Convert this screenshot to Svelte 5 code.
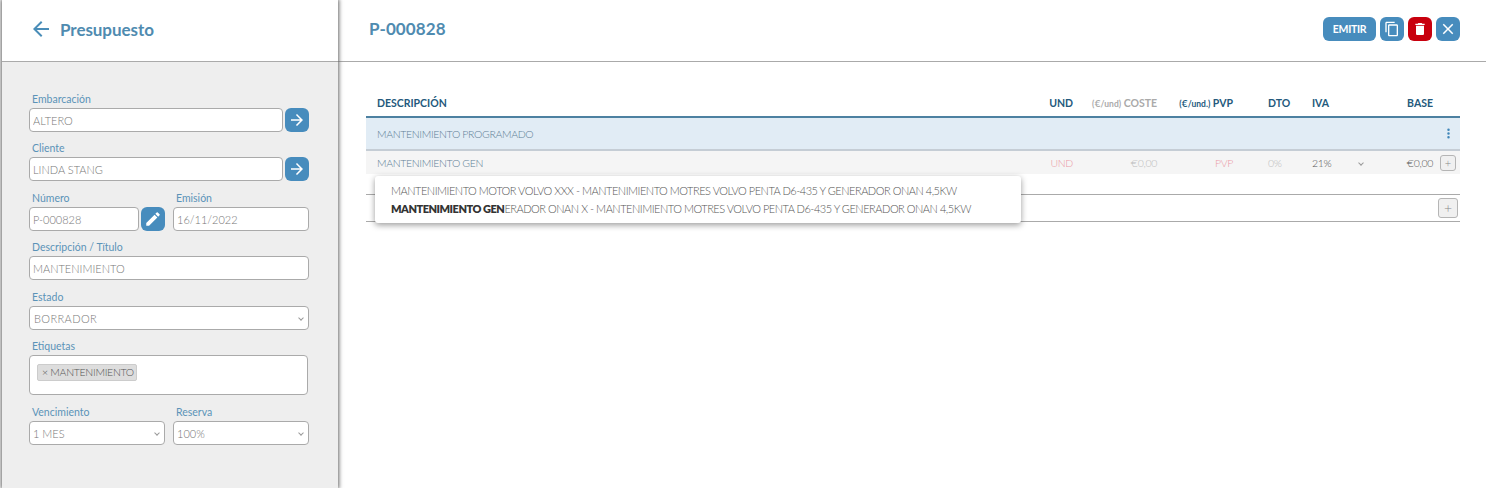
<script>
  const lines = [
    { name: 'MANTENIMIENTO MOTOR VOLVO XXX', bold: '' },
    { name: 'ERADOR ONAN X', bold: 'MANTENIMIENTO GEN' }
  ]
  const detail = ' - MANTENIMIENTO MOTRES VOLVO PENTA D6-435 Y GENERADOR ONAN 4,5KW'
</script>

<div class="page">
  <aside class="side">
    <header class="side-head">
      <svg class="back" viewBox="0 0 24 24"><path d="M20 11H7.83l5.59-5.59L12 4l-8 8 8 8 1.41-1.41L7.83 13H20v-2z" /></svg>
      <h1>Presupuesto</h1>
    </header>
    <form class="form">
      <div class="field">
        <label for="boat">Embarcación</label>
        <div class="with-btn">
          <input id="boat" value="ALTERO" />
          <button type="button" class="btn square" aria-label="Abrir embarcación">
            <svg viewBox="0 0 24 24"><path d="M12 4l-1.41 1.41L16.17 11H4v2h12.17l-5.58 5.59L12 20l8-8z" /></svg>
          </button>
        </div>
      </div>
      <div class="field">
        <label for="client">Cliente</label>
        <div class="with-btn">
          <input id="client" value="LINDA STANG" />
          <button type="button" class="btn square" aria-label="Abrir cliente">
            <svg viewBox="0 0 24 24"><path d="M12 4l-1.41 1.41L16.17 11H4v2h12.17l-5.58 5.59L12 20l8-8z" /></svg>
          </button>
        </div>
      </div>
      <div class="two nudge">
        <div class="field">
          <label for="num">Número</label>
          <div class="with-btn tight">
            <input id="num" value="P-000828" />
            <button type="button" class="btn square" aria-label="Editar número">
              <svg viewBox="0 0 24 24"><path d="M3 17.25V21h3.75L17.81 9.94l-3.75-3.75L3 17.25zM20.71 7.04a1 1 0 0 0 0-1.41l-2.34-2.34a1 1 0 0 0-1.41 0l-1.83 1.83 3.75 3.75 1.83-1.83z" /></svg>
            </button>
          </div>
        </div>
        <div class="field">
          <label for="date">Emisión</label>
          <input id="date" value="16/11/2022" />
        </div>
      </div>
      <div class="field">
        <label for="title">Descripción / Título</label>
        <input id="title" value="MANTENIMIENTO" />
      </div>
      <div class="field nudge">
        <label for="state">Estado</label>
        <div class="select wide" id="state">BORRADOR<span class="chev"></span></div>
      </div>
      <div class="field">
        <span class="lab">Etiquetas</span>
        <div class="tags"><span class="tag">× MANTENIMIENTO</span></div>
      </div>
      <div class="two nudge">
        <div class="field">
          <span class="lab">Vencimiento</span>
          <div class="select">1 MES<span class="chev"></span></div>
        </div>
        <div class="field">
          <span class="lab">Reserva</span>
          <div class="select">100%<span class="chev"></span></div>
        </div>
      </div>
    </form>
  </aside>

  <main class="main">
    <header class="main-head">
      <h2>P-000828</h2>
      <div class="actions">
        <button class="btn emit">EMITIR</button>
        <button class="btn square small-icon" aria-label="Duplicar">
          <svg viewBox="0 0 24 24"><path d="M16 1H4c-1.1 0-2 .9-2 2v14h2V3h12V1zm3 4H8c-1.1 0-2 .9-2 2v14c0 1.1.9 2 2 2h11c1.1 0 2-.9 2-2V7c0-1.1-.9-2-2-2zm0 16H8V7h11v14z" /></svg>
        </button>
        <button class="btn square small-icon red" aria-label="Eliminar">
          <svg viewBox="0 0 24 24"><path d="M6 19c0 1.1.9 2 2 2h8c1.1 0 2-.9 2-2V7H6v12zM19 4h-3.5l-1-1h-5l-1 1H5v2h14V4z" /></svg>
        </button>
        <button class="btn square" aria-label="Cerrar">
          <svg viewBox="0 0 24 24"><path d="M19 6.41L17.59 5 12 10.59 6.41 5 5 6.41 10.59 12 5 17.59 6.41 19 12 13.41 17.59 19 19 17.59 13.41 12z" /></svg>
        </button>
      </div>
    </header>

    <section class="table">
      <div class="row head">
        <span>DESCRIPCIÓN</span>
        <span class="r">UND</span>
        <span class="r muted"><small>(€/und)</small> COSTE</span>
        <span class="r"><small>(€/und.)</small> PVP</span>
        <span class="dto">DTO</span>
        <span>IVA</span>
        <span class="r">BASE</span>
        <span></span>
      </div>
      <div class="chapter">
        <span>MANTENIMIENTO PROGRAMADO</span>
        <svg class="dots" viewBox="0 0 24 24"><path d="M12 8a2 2 0 1 0 0-4 2 2 0 0 0 0 4zm0 2a2 2 0 1 0 0 4 2 2 0 0 0 0-4zm0 6a2 2 0 1 0 0 4 2 2 0 0 0 0-4z" /></svg>
      </div>
      <div class="row item">
        <span class="desc">MANTENIMIENTO GEN</span>
        <span class="r pink">UND</span>
        <span class="r faint">€0,00</span>
        <span class="r pink">PVP</span>
        <span class="dto faint">0%</span>
        <span class="iva">21%<span class="chev"></span></span>
        <span class="r">€0,00</span>
        <span class="plus-cell"><button class="plus small">+</button></span>
      </div>
      <div class="add-row">
        <button class="plus">+</button>
      </div>

      <div class="suggest">
        {#each lines as line}
          <div><b>{line.bold}</b>{line.name}{detail}</div>
        {/each}
      </div>
    </section>
  </main>
</div>

<style>
  :global(body) {
    margin: 0;
    background: #fff;
  }
  .page {
    display: flex;
    height: 488px;
    overflow: hidden;
    font-family: Lato, "Open Sans", sans-serif;
    font-weight: 300;
    color: #555;
    font-size: 11px;
    font-variant-numeric: lining-nums;
  }
  .side {
    width: 336px;
    margin-left: 2px;
    background: #eee;
    box-shadow: 0 0 4px 1px #666;
    flex: none;
    position: relative;
    z-index: 1;
  }
  .side-head {
    height: 62px;
    background: #fff;
    border-bottom: 1px solid #aaa;
    display: flex;
    align-items: center;
    box-sizing: border-box;
    padding: 0 0 3px 27px;
    gap: 7px;
  }
  .back {
    width: 24px;
    height: 24px;
    fill: #4a8db8;
  }
  h1, h2 {
    margin: 0;
    font-size: 17px;
    font-weight: 700;
    color: #4f8bb0;
  }
  h1 {
    letter-spacing: -0.05px;
  }
  h2 {
    margin-bottom: 2px;
    letter-spacing: 0.1px;
  }
  .form {
    padding: 32px 29px 0 27px;
    display: flex;
    flex-direction: column;
    gap: 11px;
  }
  .field {
    display: flex;
    flex-direction: column;
    min-width: 0;
  }
  label, .lab {
    color: #5b93b8;
    font-size: 10.5px;
    line-height: 11px;
    margin: 0 0 3px 3px;
    font-weight: 400;
  }
  input, .select {
    box-sizing: border-box;
    height: 24px;
    width: 100%;
    min-width: 0;
    border: 1px solid #aaa;
    border-radius: 4px;
    background: #fff;
    padding: 0 3px;
    font: inherit;
    color: #777;
    outline: none;
    display: flex;
    align-items: center;
    justify-content: space-between;
  }
  .wide {
    padding-left: 4px;
    letter-spacing: 0.4px;
  }
  .with-btn {
    display: grid;
    grid-template-columns: 1fr 24px;
    gap: 2px;
  }
  .two {
    display: grid;
    grid-template-columns: 136px 136px;
    gap: 8px;
  }
  .with-btn.tight {
    grid-template-columns: 110px 24px;
  }
  .nudge {
    margin-top: 1px;
  }
  .btn {
    border: none;
    height: 24px;
    padding: 0;
    border-radius: 6px;
    background: #478cbd;
    color: #fff;
    font: inherit;
    display: flex;
    align-items: center;
    justify-content: center;
  }
  .square {
    width: 24px;
  }
  .square svg {
    width: 18px;
    height: 18px;
    fill: #fff;
  }
  .small-icon svg {
    width: 16px;
    height: 16px;
  }
  .red {
    background: #c8000e;
  }
  .emit {
    width: 53px;
    font-size: 10.5px;
    font-weight: 700;
    letter-spacing: -0.3px;
  }
  .chev {
    width: 3px;
    height: 3px;
    border-right: 1px solid #999;
    border-bottom: 1px solid #999;
    transform: rotate(45deg);
    margin-right: 2px;
    flex: none;
  }
  .tags {
    box-sizing: border-box;
    width: 279px;
    height: 40px;
    background: #fff;
    border: 1px solid #aaa;
    border-radius: 4px;
    padding: 8px 7px;
  }
  .tag {
    display: block;
    background: #ddd;
    border: 1px solid #ccc;
    border-radius: 2px;
    padding: 0 4px;
    line-height: 15px;
    width: 100px;
    box-sizing: border-box;
    white-space: nowrap;
    font-size: 10.5px;
    letter-spacing: -0.3px;
  }
  .main {
    flex: 1;
    min-width: 0;
  }
  .main-head {
    height: 62px;
    box-sizing: border-box;
    border-bottom: 1px solid #aaa;
    display: flex;
    align-items: center;
    justify-content: space-between;
    padding: 0 26px 3px 31px;
  }
  .actions {
    display: flex;
    gap: 4px;
  }
  .table {
    margin: 28px 26px 0 28px;
    position: relative;
    font-size: 10.5px;
    letter-spacing: -0.35px;
  }
  .row {
    display: grid;
    grid-template-columns: 1fr 60px 84px 76px 79px 58px 63px 27px;
    padding-left: 11px;
    align-items: center;
  }
  .head {
    height: 28px;
    font-weight: 700;
    color: #24597c;
    border-bottom: 2px solid #4d81a1;
    box-sizing: border-box;
    letter-spacing: 0;
  }
  .r {
    text-align: right;
  }
  small {
    font-size: 8.5px;
  }
  .muted {
    color: #aaa;
  }
  .dto {
    padding-left: 35px;
  }
  .chapter {
    height: 31px;
    background: #e1ecf5;
    border-bottom: 2px solid #c5cdd5;
    display: flex;
    align-items: center;
    justify-content: space-between;
    padding: 0 4px 0 11px;
    color: #5f7f95;
  }
  .dots {
    width: 15px;
    height: 15px;
    fill: #3f86b8;
  }
  .item {
    height: 23px;
    background: #f5f5f5;
  }
  .desc {
    color: #5f7f95;
  }
  .pink {
    color: #eb9aa6;
  }
  .faint {
    color: #bbb;
  }
  .iva {
    display: flex;
    justify-content: space-between;
    align-items: center;
    padding-right: 5px;
  }
  .plus-cell {
    display: flex;
    justify-content: flex-end;
    padding-right: 4px;
  }
  .plus {
    box-sizing: border-box;
    width: 20px;
    height: 20px;
    padding: 0;
    border: 1px solid #b5b5b5;
    border-radius: 3px;
    background: #f0f0f0;
    color: #888;
    font: inherit;
    font-size: 14px;
    line-height: 1;
  }
  .plus.small {
    width: 16px;
    height: 16px;
    font-size: 11px;
  }
  .add-row {
    margin-top: 20px;
    height: 28px;
    box-sizing: border-box;
    border-top: 1px solid #aaa;
    border-bottom: 1px solid #aaa;
    display: flex;
    align-items: center;
    justify-content: flex-end;
    padding-right: 2px;
  }
  .suggest {
    position: absolute;
    left: 9px;
    top: 86px;
    width: 646px;
    height: 47px;
    box-sizing: border-box;
    padding: 6px 16px;
    background: #fff;
    border-radius: 3px;
    box-shadow: 0 2px 6px rgba(0, 0, 0, 0.4);
    line-height: 18px;
    white-space: nowrap;
    z-index: 2;
    font-size: 11px;
    letter-spacing: -0.48px;
  }
  .suggest b {
    font-weight: 800;
    color: #333;
  }
</style>
